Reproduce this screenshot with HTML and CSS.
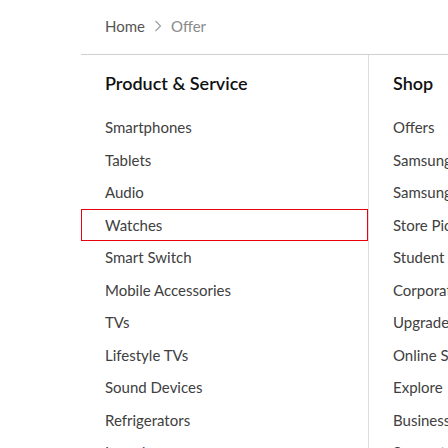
FILE: index.html
```html
<!DOCTYPE html>
<html lang="en">
<head>
<meta charset="utf-8">
<title>Offer</title>
<link rel="stylesheet" href="styles.css">
</head>
<body>
<div class="page">
  <nav class="breadcrumb">
    <span class="crumb-home">Home</span>
    <svg class="crumb-sep" width="8" height="12" viewBox="0 0 8 12" aria-hidden="true"><polyline points="1.5,1 6.5,6 1.5,11" fill="none" stroke="#9a9a9a" stroke-width="1.1"/></svg>
    <span class="crumb-current">Offer</span>
  </nav>
  <div class="menu">
    <section class="col col-main">
      <h2 class="col-title">Product &amp; Service</h2>
      <ul class="list">
        <li class="item">Smartphones</li>
        <li class="item">Tablets</li>
        <li class="item">Audio</li>
        <li class="item item-focus">Watches</li>
        <li class="item">Smart Switch</li>
        <li class="item">Mobile Accessories</li>
        <li class="item">TVs</li>
        <li class="item">Lifestyle TVs</li>
        <li class="item">Sound Devices</li>
        <li class="item">Refrigerators</li>
        <li class="item">Laundry</li>
      </ul>
    </section>
    <section class="col col-side">
      <h2 class="col-title">Shop</h2>
      <ul class="list">
        <li class="item">Offers</li>
        <li class="item">Samsung Care+</li>
        <li class="item">Samsung Finance+</li>
        <li class="item">Store Pick-up</li>
        <li class="item">Student Offers</li>
        <li class="item">Corporate Employee Program</li>
        <li class="item">Upgrade Programme</li>
        <li class="item">Online Shop</li>
        <li class="item">Explore</li>
        <li class="item">Business</li>
        <li class="item">Support</li>
      </ul>
    </section>
  </div>
</div>
</body>
</html>
```

FILE: styles.css
```css
html, body {
  margin: 0;
  padding: 0;
  background: #fff;
  overflow: hidden;
}

body {
  font-family: Lato, "Noto Sans", sans-serif;
  color: #333;
}

.page {
  padding-left: 81px;
  width: 500px;
}

.breadcrumb {
  height: 54px;
  padding-left: 24px;
  display: flex;
  align-items: center;
  gap: 9px;
  font-size: 15px;
  box-sizing: border-box;
  padding-bottom: 3px;
}

.crumb-home { color: #555; }
.crumb-sep { display: block; margin-top: 1px; }
.crumb-current { color: #8a8a8a; }

.menu {
  display: flex;
  border-top: 1px solid #cfcfcf;
  height: 420px;
}

.col {
  box-sizing: border-box;
}

.col-main {
  width: 287px;
  flex: none;
}

.col-side {
  flex: none;
  width: 200px;
  border-left: 1px solid #dcdcdc;
  white-space: nowrap;
}

.col-title {
  margin: 0;
  padding: 16px 0 0 24px;
  font-size: 18px;
  line-height: 24px;
  font-weight: 600;
  color: #111;
}

.list {
  list-style: none;
  margin: 16px 0 0 0;
  padding: 0;
}

.item {
  height: 33px;
  line-height: 33px;
  padding-left: 24px;
  font-size: 15px;
  color: #404040;
  box-sizing: border-box;
  white-space: nowrap;
}

.item:nth-child(even) {
  height: 32px;
  line-height: 32px;
}

.item-focus {
  outline: 1px solid #e8000b;
  outline-offset: -1px;
}
```
